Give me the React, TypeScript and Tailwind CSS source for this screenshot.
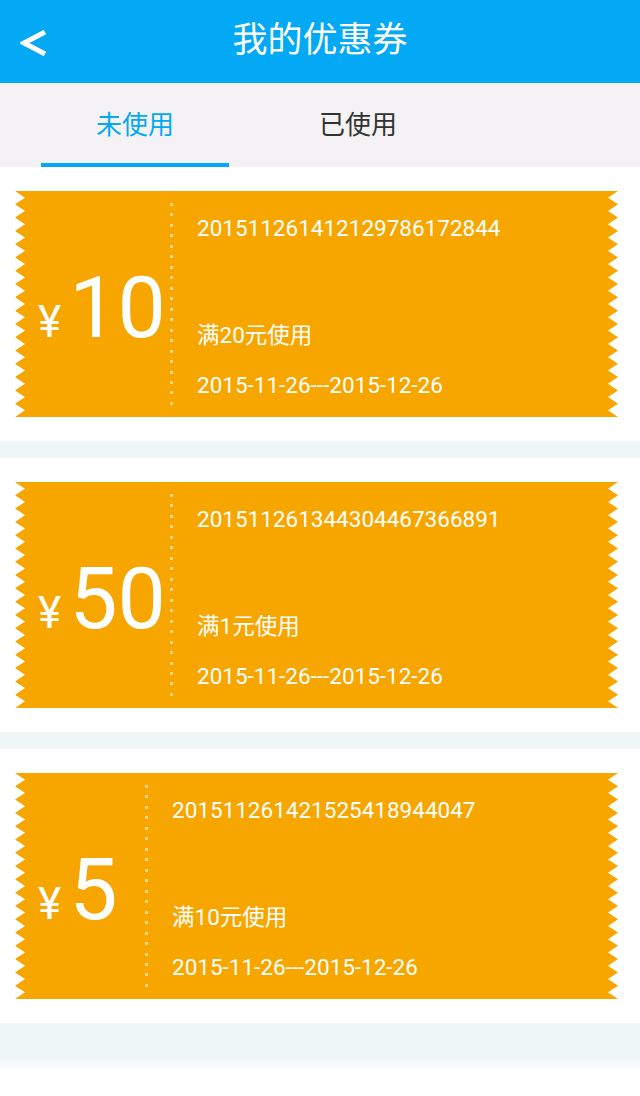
const coupons = [
  { amount: '10', code: '201511261412129786172844', rule: '满20元使用', left: 'w-[145px]' },
  { amount: '50', code: '201511261344304467366891', rule: '满1元使用', left: 'w-[145px]' },
  { amount: '5', code: '201511261421525418944047', rule: '满10元使用', left: 'w-[120px]' },
];

const TEETH = 17;
const H = 226;

function Edge({ side }: { side: 'left' | 'right' }) {
  const p = H / TEETH;
  const pts: string[] = [];
  if (side === 'left') {
    pts.push('10,0', '0,0');
    for (let k = 0; k < TEETH; k++) {
      pts.push(`10,${k * p + p / 2}`, `0,${(k + 1) * p}`);
    }
    pts.push(`10,${H}`);
  } else {
    pts.push('0,0', '10,0');
    for (let k = 0; k < TEETH; k++) {
      pts.push(`0,${k * p + p / 2}`, `10,${(k + 1) * p}`);
    }
    pts.push(`0,${H}`);
  }
  return (
    <svg width="10" height={H} viewBox={`0 0 10 ${H}`} className="shrink-0">
      <polygon points={pts.join(' ')} fill="#f7a600" />
    </svg>
  );
}

function Coupon({ amount, code, rule, left }: (typeof coupons)[number]) {
  return (
    <section className="py-[24px]">
      <div className="ml-[15px] flex h-[226px] w-[603px]">
        <Edge side="left" />
        <div className="flex flex-1 bg-[#f7a600] text-white">
          <div className={`flex shrink-0 items-center pl-[13px] pt-[8px] ${left}`}>
            <div className="flex items-baseline">
              <span className="text-[44px] leading-none">¥</span>
              <span className="ml-[8px] text-[86px] leading-none">{amount}</span>
            </div>
          </div>
          <div className="flex w-[3px] shrink-0 flex-col justify-between py-[12px]">
            {Array.from({ length: 20 }).map((_, i) => (
              <span key={i} className="h-[3px] w-[3px] rounded-[1px] bg-white/60" />
            ))}
          </div>
          <div className="flex flex-col pl-[24px] pt-[26px] text-[22.5px] leading-[22px]">
            <div>{code}</div>
            <div className="mt-[85px]">{rule}</div>
            <div className="mt-[28px]">2015-11-26---2015-12-26</div>
          </div>
        </div>
        <Edge side="right" />
      </div>
    </section>
  );
}

export default function App() {
  return (
    <div className="min-h-screen bg-white font-[Roboto,'Noto_Sans_CJK_SC',sans-serif]">
      <header className="grid h-[83px] grid-cols-[1fr_auto_1fr] items-center bg-[#03a9f4]">
        <div className="pl-[20px] pt-[3px]">
          <svg width="27" height="26" viewBox="0 0 27 26">
            <polyline points="25,2 4,13 25,24" fill="none" stroke="white" strokeWidth="5" strokeLinejoin="miter" />
          </svg>
        </div>
        <h1 className="text-[35px] text-white">我的优惠券</h1>
        <div />
      </header>

      <nav className="flex h-[84px] gap-[35px] bg-[#f4f2f4] pl-[41px]">
        <div className="flex w-[188px] items-center justify-center border-b-4 border-[#03a9f4] pt-[4px] text-[26px] text-[#03a9f4]">
          未使用
        </div>
        <div className="flex w-[188px] items-center justify-center border-b-4 border-transparent pt-[4px] text-[26px] text-[#333]">
          已使用
        </div>
      </nav>

      {coupons.map((c, i) => (
        <div key={c.code}>
          <Coupon {...c} />
          {i < coupons.length - 1 && <div className="h-[17px] bg-[#eff6f6]" />}
        </div>
      ))}

      <div className="h-[34px] bg-[#eff6f6]" />
      <div className="h-[14px] bg-linear-to-b from-[#eff6f6] to-white" />
    </div>
  );
}
